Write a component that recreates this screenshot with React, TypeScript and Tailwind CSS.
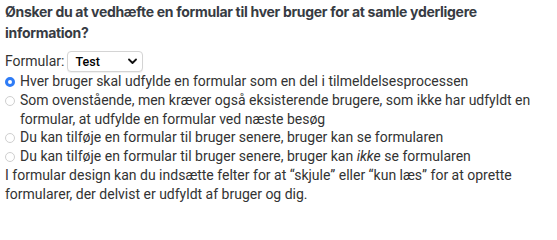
import { useState } from "react";

const OPTIONS = [
  "Hver bruger skal udfylde en formular som en del i tilmeldelsesprocessen",
  "Som ovenstående, men kræver også eksisterende brugere, som ikke har udfyldt en formular, at udfylde en formular ved næste besøg",
  "Du kan tilføje en formular til bruger senere, bruger kan se formularen",
  "hidden",
];

export default function App() {
  const [choice, setChoice] = useState(0);
  const [form, setForm] = useState("Test");

  return (
    <div className="h-[202px] overflow-hidden pl-[5px] pt-[1px] font-['Roboto','Liberation_Sans',sans-serif] text-[14px] text-[#333]">
      <h4 className="font-['Inter',sans-serif] font-bold text-[#373b43] leading-[21px] tracking-[-0.3px]">
        Ønsker du at vedhæfte en formular til hver bruger for at samle yderligere information?
      </h4>

      <div className="mt-[8px] flex items-center gap-[3px] h-[21px]">
        <label htmlFor="form-select">Formular:</label>
        <div className="relative">
          <select
            id="form-select"
            value={form}
            onChange={(e) => setForm(e.target.value)}
            className="appearance-none w-[76px] h-[21px] rounded-[4px] border border-[#d4d4d4] bg-white pl-[7px] text-[12.5px] font-medium leading-[19px] text-black shadow-[0_1px_1px_rgba(0,0,0,0.06)]"
          >
            <option>Test</option>
          </select>
          <svg
            className="pointer-events-none absolute right-[6px] top-[7px]"
            width="9"
            height="7"
            viewBox="0 0 9 7"
            fill="none"
          >
            <path d="M1 1.5 L4.5 5 L8 1.5" stroke="#111" strokeWidth="1.8" strokeLinecap="round" strokeLinejoin="round" />
          </svg>
        </div>
      </div>

      <div className="leading-[18.8px]">
        {OPTIONS.map((text, i) => (
          <label key={i} className="flex items-start gap-[5px]">
            <input
              type="radio"
              name="attach"
              checked={choice === i}
              onChange={() => setChoice(i)}
              className={
                "appearance-none shrink-0 mt-[5px] w-[10px] h-[10px] rounded-full bg-white " +
                (choice === i ? "border-[3px] border-[#2f7cf6]" : "border border-[#cfcfcf]")
              }
            />
            <span>
              {i === 3 ? (
                <>
                  Du kan tilføje en formular til bruger senere, bruger kan <i>ikke</i> se formularen
                </>
              ) : (
                text
              )}
            </span>
          </label>
        ))}
        <p>
          I formular design kan du indsætte felter for at “skjule” eller “kun læs” for at oprette formularer, der delvist er
          udfyldt af bruger og dig.
        </p>
      </div>
    </div>
  );
}
